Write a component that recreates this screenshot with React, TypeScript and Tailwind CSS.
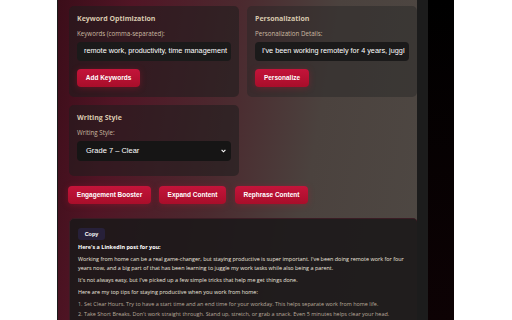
import React from 'react';

const Card: React.FC<{ title: string; children: React.ReactNode; className?: string }> = ({ title, children, className }) => (
  <div className={`rounded-[5px] px-[8px] pt-[8px] pb-[10px] ${className || ''}`}>
    <h3 className="text-[7px] leading-[10px] font-bold text-[#d8c8ae] mb-[6px]">{title}</h3>
    {children}
  </div>
);

const Label: React.FC<{ children: React.ReactNode }> = ({ children }) => (
  <label className="block text-[6.2px] leading-[8px] text-[#cbb9a1] mb-[4px]">{children}</label>
);

const RedButton: React.FC<{ children: React.ReactNode; className?: string }> = ({ children, className }) => (
  <button
    className={`block h-[18px] rounded-[4px] bg-[linear-gradient(180deg,#c4143a,#a80e2a)] text-white text-[6.5px] font-bold font-['Liberation_Sans',Arial,sans-serif] shadow-[0_1px_6px_rgba(190,20,50,0.35)] ${className || ''}`}
  >
    {children}
  </button>
);

export default function App() {
  return (
    <div className="flex h-[320px] w-[512px] bg-white overflow-hidden font-['Open_Sans','Noto_Sans',sans-serif]">
      <div className="w-[57px] shrink-0" />
      <div className="flex w-[397px] shrink-0 border-l border-[#1a1a1a]">
        {/* scroll area */}
        <div className="w-[359px] shrink-0 overflow-hidden bg-[linear-gradient(100deg,#3b0d19_0%,#511525_18%,#4b2a2f_45%,#4b423e_68%,#4e4843_100%)]">
          <div className="w-[420px] pl-[11px] pt-[6px]">
            <div className="flex gap-[8px]">
              <Card title="Keyword Optimization" className="w-[170px] h-[91px] bg-[#1e1e1e]/55">
                <Label>Keywords (comma-separated):</Label>
                <div className="h-[19px] rounded-[4px] bg-[#1b1a1a] px-[7px] flex items-center text-[7.3px] text-white whitespace-nowrap overflow-hidden font-['Liberation_Sans',Arial,sans-serif]">
                  remote work, productivity, time management
                </div>
                <RedButton className="mt-[8px] w-[63px]">Add Keywords</RedButton>
              </Card>
              <Card title="Personalization" className="w-[170px] h-[91px] bg-[#262626]/45">
                <Label>Personalization Details:</Label>
                <div className="h-[19px] rounded-[4px] bg-[#1b1a1a] px-[7px] flex items-center text-[7.3px] text-white whitespace-nowrap overflow-hidden font-['Liberation_Sans',Arial,sans-serif]">
                  I've been working remotely for 4 years, juggl
                </div>
                <RedButton className="mt-[8px] w-[54px]">Personalize</RedButton>
              </Card>
            </div>

            <Card title="Writing Style" className="w-[170px] h-[71px] mt-[8px] bg-[#1e1e1e]/55">
              <Label>Writing Style:</Label>
              <div className="relative h-[20px] rounded-[4px] bg-[#161515] flex items-center pl-[9px] text-[7.5px] text-white font-['Liberation_Sans',Arial,sans-serif]">
                Grade 7 – Clear
                <svg className="absolute right-[5px] top-[8px]" width="5" height="4" viewBox="0 0 5 4">
                  <path d="M0.6 0.8 L2.5 2.8 L4.4 0.8" fill="none" stroke="white" strokeWidth="1.1" />
                </svg>
              </div>
            </Card>

            <div className="flex gap-[8px] mt-[10px] -ml-[1px]">
              <RedButton className="w-[83px]">Engagement Booster</RedButton>
              <RedButton className="w-[67px]">Expand Content</RedButton>
              <RedButton className="w-[73px] ml-[1px]">Rephrase Content</RedButton>
            </div>

            <div className="mt-[14px] w-[349px] h-[120px] rounded-t-[5px] border border-[#3a1c24] bg-[#1c1819]/90 px-[8px] pt-[9px]">
              <button className="block h-[12px] w-[27px] rounded-[3px] bg-[#272039] text-white text-[5.5px] font-bold font-['Liberation_Sans',Arial,sans-serif]">
                Copy
              </button>
              <div className="mt-[3px] text-[5.45px] leading-[8.5px] text-[#ece6df]">
                <p className="font-bold text-white mb-[3.5px]">Here's a LinkedIn post for you:</p>
                <p className="mb-[3.5px]">
                  Working from home can be a real game-changer, but staying productive is super important. I've been doing remote work for four years now, and a big part of that has been learning to juggle my work tasks while also being a parent.
                </p>
                <p className="mb-[3.5px]">It's not always easy, but I've picked up a few simple tricks that help me get things done.</p>
                <p className="mb-[3.5px]">Here are my top tips for staying productive when you work from home:</p>
                <p className="mb-[2px] text-[#b9ab9c]">1. Set Clear Hours. Try to have a start time and an end time for your workday. This helps separate work from home life.</p>
                <p className="text-[#b9ab9c]">2. Take Short Breaks. Don't work straight through. Stand up, stretch, or grab a snack. Even 5 minutes helps clear your head.</p>
              </div>
            </div>
          </div>
        </div>
        {/* scrollbar */}
        <div className="w-[11px] shrink-0 bg-[#1c1c1c]" />
        <div className="w-[26px] shrink-0 bg-[linear-gradient(180deg,#000000,#0d0204)]" />
      </div>
    </div>
  );
}
